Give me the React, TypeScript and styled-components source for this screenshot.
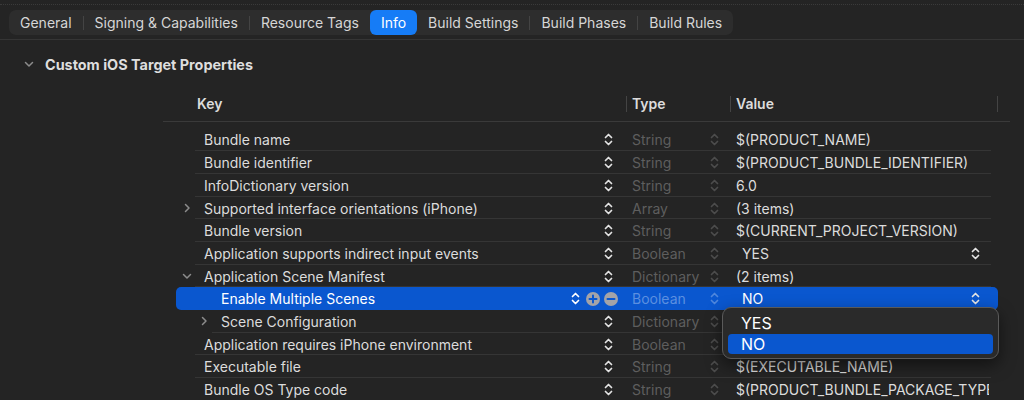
import React from 'react';
import styled, { createGlobalStyle } from 'styled-components';

const GlobalStyle = createGlobalStyle`
    body {
        margin: 0;
        background-color: #242424;
        font-family: Inter, "Liberation Sans", sans-serif;
        color: #dcdcdc;
        -webkit-font-smoothing: antialiased;
    }
`;

interface RowData {
    key: string;
    type: string;
    value: string;
    level?: number;
    disclosure?: 'open' | 'closed';
    bool?: boolean;
    selected?: boolean;
    popup?: boolean;
}

// rows 9 and 10 have their values hidden under the popup
const rows: RowData[] = [
    { key: 'Bundle name', type: 'String', value: '$(PRODUCT_NAME)' },
    { key: 'Bundle identifier', type: 'String', value: '$(PRODUCT_BUNDLE_IDENTIFIER)' },
    { key: 'InfoDictionary version', type: 'String', value: '6.0' },
    { key: 'Supported interface orientations (iPhone)', type: 'Array', value: '(3 items)', disclosure: 'closed' },
    { key: 'Bundle version', type: 'String', value: '$(CURRENT_PROJECT_VERSION)' },
    { key: 'Application supports indirect input events', type: 'Boolean', value: 'YES', bool: true },
    { key: 'Application Scene Manifest', type: 'Dictionary', value: '(2 items)', disclosure: 'open' },
    { key: 'Enable Multiple Scenes', type: 'Boolean', value: 'NO', level: 1, bool: true, selected: true, popup: true },
    { key: 'Scene Configuration', type: 'Dictionary', value: '', level: 1, disclosure: 'closed' },
    { key: 'Application requires iPhone environment', type: 'Boolean', value: '' },
    { key: 'Executable file', type: 'String', value: '$(EXECUTABLE_NAME)' },
    { key: 'Bundle OS Type code', type: 'String', value: '$(PRODUCT_BUNDLE_PACKAGE_TYPE)' },
];

const tabs = ['General', 'Signing & Capabilities', 'Resource Tags', 'Info', 'Build Settings', 'Build Phases', 'Build Rules'];
const activeTab = 'Info';

const Stepper = ({ color }: { color: string }) => (
    <svg width="9" height="13" viewBox="0 0 9 13" fill="none" stroke={color} strokeWidth="1.7" strokeLinecap="round" strokeLinejoin="round">
        <path d="M1.5 4.5 L4.5 1.5 L7.5 4.5" />
        <path d="M1.5 8.5 L4.5 11.5 L7.5 8.5" />
    </svg>
);

const Chevron = ({ open }: { open: boolean }) => (
    <svg width="10" height="10" viewBox="0 0 10 10" fill="none" stroke="#8c8c8c" strokeWidth="1.5" strokeLinecap="round" strokeLinejoin="round">
        {open ? <path d="M1.5 3.5 L5 7 L8.5 3.5" /> : <path d="M3.5 1.5 L7 5 L3.5 8.5" />}
    </svg>
);

const RoundButton = ({ sign }: { sign: 'plus' | 'minus' }) => (
    <svg width="14" height="14" viewBox="0 0 14 14">
        <circle cx="7" cy="7" r="7" fill="#a3a3a8" />
        <path d={sign === 'plus' ? 'M3.5 7 H10.5 M7 3.5 V10.5' : 'M3.5 7 H10.5'} stroke="#0a57cf" strokeWidth="2" strokeLinecap="round" />
    </svg>
);

export default function App() {
    return (
        <>
            <GlobalStyle />
            <Page>
                <TopRule />
                <TabBar>
                    <Segmented>
                        {tabs.map((t, i) => {
                            const prev = tabs[i - 1];
                            const showDivider = i > 0 && t !== activeTab && prev !== activeTab;
                            return (
                                <React.Fragment key={t}>
                                    {showDivider && <TabDivider />}
                                    <Tab $active={t === activeTab}>{t}</Tab>
                                </React.Fragment>
                            );
                        })}
                    </Segmented>
                </TabBar>
                <SectionHeader>
                    <Chevron open />
                    <SectionTitle>Custom iOS Target Properties</SectionTitle>
                </SectionHeader>
                <Table>
                    <HeaderRow>
                        <HeadCell $width={463} $pad={34}>Key</HeadCell>
                        <HeadCell $width={104} $pad={5} $divider>Type</HeadCell>
                        <HeadCell $width={267} $pad={5} $divider>Value</HeadCell>
                        <HeadCell $width={13} $pad={0} $divider />
                    </HeaderRow>
                    <Body>
                        {rows.map(r => (
                            <Row key={r.key} $level={r.level || 0} $selected={!!r.selected}>
                                <KeyCell $level={r.level || 0}>
                                    <Disclosure>{r.disclosure && <Chevron open={r.disclosure === 'open'} />}</Disclosure>
                                    <KeyText>{r.key}</KeyText>
                                    <KeyControls>
                                        <Stepper color={r.selected ? '#ffffff' : '#e4e4e4'} />
                                        {r.selected && (
                                            <AddRemove>
                                                <RoundButton sign="plus" />
                                                <RoundButton sign="minus" />
                                            </AddRemove>
                                        )}
                                    </KeyControls>
                                </KeyCell>
                                <TypeCell $selected={!!r.selected}>
                                    <span>{r.type}</span>
                                    <Stepper color={r.selected ? '#4f86dc' : '#4c4c4c'} />
                                </TypeCell>
                                <ValueCell $bool={!!r.bool}>
                                    <ValueText>{r.value}</ValueText>
                                    {r.bool && <Stepper color="#e4e4e4" />}
                                    {r.popup && (
                                        <Popup>
                                            <PopupItem>YES</PopupItem>
                                            <PopupItem $checked>NO</PopupItem>
                                        </Popup>
                                    )}
                                </ValueCell>
                            </Row>
                        ))}
                    </Body>
                </Table>
            </Page>
        </>
    );
}

const Page = styled.div`
    width: 1024px;
    height: 400px;
    overflow: hidden;
    background-color: #242424;
`;

const TopRule = styled.div`
    height: 4px;
    border-bottom: 1px dotted #3a3a3a;
`;

const TabBar = styled.div`
    display: flex;
    padding: 5px 9px 4px;
    border-bottom: 1px solid #353535;
`;

const Segmented = styled.div`
    display: flex;
    align-items: center;
    height: 25px;
    background-color: #2d2d2d;
    border-radius: 7px;
`;

const Tab = styled.div<{ $active: boolean }>`
    height: 25px;
    display: flex;
    align-items: center;
    padding: 0 11px;
    font-size: 14px;
    color: ${p => p.$active ? '#ffffff' : '#d6d6d6'};
    background-color: ${p => p.$active ? '#167cf6' : 'transparent'};
    border-radius: 6px;
    white-space: nowrap;
`;

const TabDivider = styled.div`
    width: 1px;
    height: 14px;
    background-color: #444;
`;

const SectionHeader = styled.div`
    height: 48px;
    display: flex;
    align-items: center;
    gap: 11px;
    padding-left: 24px;
`;

const SectionTitle = styled.div`
    font-size: 14.4px;
    font-weight: 700;
    color: #dedede;
`;

const Table = styled.div`
    margin-left: 163px;
    width: 847px;
`;

const HeaderRow = styled.div`
    display: flex;
    height: 33px;
    border-bottom: 1px solid #3a3a3a;
`;

const HeadCell = styled.div<{ $width: number; $pad: number; $divider?: boolean }>`
    width: ${p => p.$width}px;
    padding-left: ${p => p.$pad}px;
    box-sizing: border-box;
    margin-top: 8px;
    height: 16px;
    line-height: 16px;
    font-size: 14px;
    font-weight: 600;
    color: #dcdcdc;
    border-left: ${p => p.$divider ? '1px solid #444' : 'none'};
`;

const Body = styled.div`
    padding: 6.6px 0 0 13px;
`;

const Row = styled.div<{ $level: number; $selected: boolean }>`
    position: relative;
    display: grid;
    grid-template-columns: 450px 104px 268px;
    width: 822px;
    height: 22.7px;
    align-items: center;
    font-size: 14px;
    border-radius: 5px;
    background-color: ${p => p.$selected ? '#0a57cf' : 'transparent'};
    color: ${p => p.$selected ? '#ffffff' : '#dcdcdc'};

    &::after {
        content: '';
        position: absolute;
        left: ${p => p.$level ? 36 : 19}px;
        right: 7px;
        bottom: 0;
        height: 1px;
        background-color: ${p => p.$selected ? 'transparent' : '#353535'};
    }
`;

const KeyCell = styled.div<{ $level: number }>`
    display: flex;
    align-items: center;
    padding-left: ${p => 6 + p.$level * 17}px;
    padding-right: 13px;
    min-width: 0;
`;

const Disclosure = styled.div`
    width: 22px;
    display: flex;
    align-items: center;
`;

const KeyText = styled.div`
    flex: 1;
    white-space: nowrap;
    overflow: hidden;
`;

const KeyControls = styled.div`
    display: flex;
    align-items: center;
    gap: 6px;
`;

const AddRemove = styled.div`
    display: flex;
    gap: 4px;
    margin-right: -5px;
`;

const TypeCell = styled.div<{ $selected: boolean }>`
    display: flex;
    align-items: center;
    justify-content: space-between;
    padding: 0 11px 0 6px;
    color: ${p => p.$selected ? '#5b8fe0' : '#5e5e5e'};
`;

const ValueCell = styled.div<{ $bool: boolean }>`
    position: relative;
    display: flex;
    align-items: center;
    justify-content: space-between;
    padding: 0 ${p => p.$bool ? 18 : 4}px 0 ${p => p.$bool ? 12 : 6}px;
    min-width: 0;
`;

const ValueText = styled.div`
    flex: 0 1 auto;
    min-width: 0;
    max-width: 253px;
    white-space: nowrap;
    overflow: hidden;
    text-overflow: clip;
`;

const Popup = styled.div`
    position: absolute;
    top: 100%;
    left: -8px;
    width: 277px;
    box-sizing: border-box;
    display: flex;
    flex-direction: column;
    gap: 1px;
    padding: 5px 5px 4px;
    background-color: #2a2a2a;
    border: 1px solid #5a5a5a;
    border-radius: 9px;
    box-shadow: 0 6px 16px rgba(0, 0, 0, 0.5);
    z-index: 10;
`;

const PopupItem = styled.div<{ $checked?: boolean }>`
    height: 20px;
    line-height: 20px;
    padding-left: 13px;
    font-size: 16px;
    color: #ffffff;
    border-radius: 4px;
    background-color: ${p => p.$checked ? '#0a57cf' : 'transparent'};
`;
